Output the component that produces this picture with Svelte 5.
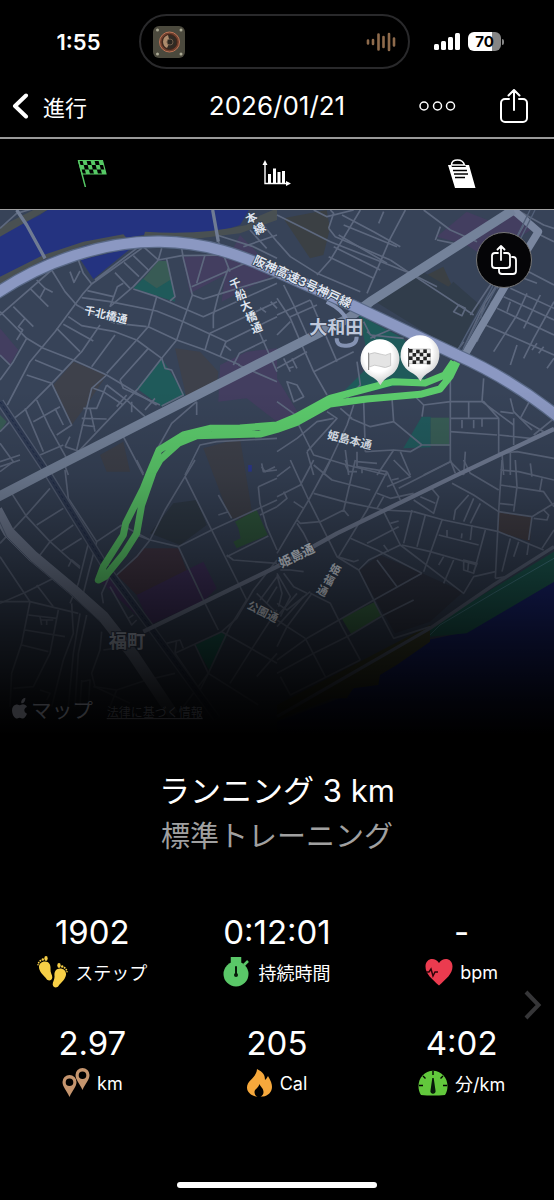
<script>
    // road geometry is kept per map tile, every tile has its own origin
    const tiles = [
        {
            x: 0,
            y: -15,
            roads: [
                'M0 70L50 25 95 12M50 15L80 60 135 160M638 15L655 110 690 200M775 375L831 500',
                'M0 330L155 195M155 195L195 260 230 300 275 325 345 355M235 165L250 205 275 237',
                'M275 237L250 265 165 380 90 470 22 600M275 237L425 130M285 225L410 130',
                'M90 250L145 305M110 225L135 250 158 262M135 250L120 278M40 305L100 365M0 320L80 400',
                'M80 400L130 430 220 465 320 510 470 600M0 525L40 470 80 400M75 340L55 365 68 375 50 405',
                'M210 200L222 232 240 198M345 203L390 250M372 172L417 215M400 152L445 195M430 125L475 165',
                'M475 165L400 245 330 305M245 278L330 290 470 318 550 350 680 410M262 257L340 275',
                'M330 305L352 245 370 235M475 165L485 130M475 165L545 152 690 150M500 162L525 275 510 288',
                'M545 130L550 160 577 270 545 360 530 405 485 460M615 150L590 235M577 270L610 282 665 265 831 215',
                'M575 245L735 175M685 190L655 270 640 330 640 370M400 252L470 275 610 335 640 322 831 235',
                'M470 275L445 365 410 405 320 505M445 365L530 405 615 435 720 480M615 435L630 385 831 290',
                'M660 455L678 410 831 335M675 422L693 437M700 480L718 445 800 405M780 308L798 322M812 290L831 310',
                'M205 335L245 362 345 380 410 405M350 355L440 365M300 360L245 440 155 535 80 610 30 650',
                'M345 390L275 485M445 430L360 525M410 405L485 460 415 550 235 740M170 370L240 440M190 358L280 408',
                'M105 465L190 500M80 510L155 535M155 535L215 660 170 690M485 460L495 490 515 495 550 570 485 603',
                'M360 525L370 550 480 600M320 510L275 550 260 610 230 735M320 540L290 610 250 610M320 540L385 590 435 635',
                'M245 640L320 642M245 660L285 665M270 610L285 680M395 590L395 622M350 605L380 570M435 615L465 580',
                'M280 550L310 560 370 600M30 650L0 680M0 715L40 770 0 800M110 585L150 670 200 760M75 610L130 740',
                'M100 650L180 605M165 610L190 660M120 750L190 720M195 725L210 695M195 725L235 738M0 450L30 480',
                'M370 695L430 810M590 590L590 630M470 735L515 655 590 590M555 810L600 720 650 710 831 700',
                'M715 480L831 530M650 90L760 125 831 160M750 75L800 130M790 60L831 110M730 125L831 90M0 770L60 750',
                'M785 785L795 800 825 785M190 770L205 810'
            ]
        },
        {
            x: 831,
            y: -15,
            roads: [
                'M0 30L80 70 160 110 400 205 590 330M155 70L170 25 160 15M155 70L175 95 340 165M195 30L290 80 370 125',
                'M250 15L160 165 120 210M385 15L340 100 270 265M200 60L360 125M185 90L330 175M170 125L310 195',
                'M155 155L290 220M0 110L40 155 120 205 250 260M305 55L320 20M110 15L150 35 230 15M440 15L520 75 600 110',
                'M480 105L530 115M490 65L475 105M400 205L380 230M340 165L400 205 480 245M560 410L530 450',
                'M530 320L545 300 565 310 555 332ZM580 330L640 240 690 150 740 60M560 430L620 300 660 240M610 340L625 290',
                'M720 15L800 60 831 70M790 90L831 110M755 200L831 240M700 250L831 310M680 275L831 345M660 310L831 390',
                'M625 360L831 450M750 265L720 330 650 440M790 270L740 370M831 290L770 400 740 460M700 290L690 320M720 420L700 480',
                'M765 435L780 415M785 445L800 425M810 490L831 460M660 250L710 190 760 130M645 290L600 410M740 220L780 235',
                'M0 280L40 340 70 410 110 500 150 570M0 330L100 285M20 240L50 300 90 390M0 390L40 350M40 335L120 300',
                'M0 440L110 400M100 285L180 470M0 490L90 440M20 460L40 500M35 490L50 485M45 460L60 490M30 530L50 590 80 575 60 540Z',
                'M0 590L70 640M110 500L230 440M240 470L250 540 200 590M260 350L280 390 380 400M280 400L360 365M270 380L295 400',
                'M520 520L520 770 560 810M520 590L620 590 665 640 665 745M620 520L615 590 710 660M700 580L710 620 765 675',
                'M765 575L730 640 800 680M831 640L770 690M520 640L665 640M575 590L575 640M555 645L555 670M590 645L590 670M615 640L615 665',
                'M520 680L660 690M345 580L350 650 435 720 520 720M435 635L440 600 520 590M410 570L440 600M350 650L280 665 220 640',
                'M260 590L265 740M230 600L210 660 140 810M190 610L225 640M150 620L180 640 90 740M0 740L60 700 120 650 170 640',
                'M90 740L110 810M65 660L110 750 210 780 330 810M435 720L400 740 350 735 300 810M265 740L350 735',
                'M520 770L440 810M370 740L400 810M565 740L560 810M665 745L720 740 831 760M675 745L680 810M700 740L700 810',
                'M665 690L760 700 831 670M710 640L710 720M205 735L215 810M240 740L240 770 300 775M670 620L710 625'
            ]
        },
        {
            x: 0,
            y: 750,
            roads: [
                'M35 100L80 170 150 245 240 325M150 85L75 170 0 250M190 145L110 195M220 195L150 245 120 285M245 235L185 272',
                'M195 30L205 115 290 245 365 195M0 290L90 425M240 320L215 300 205 320M0 430L80 395 180 345M110 375L160 440',
                'M0 425L90 425 235 460M90 425L65 550 35 640 30 740M85 465L170 475M75 510L195 530M65 555L145 575M175 450L150 580 100 680 40 685',
                'M215 430L220 520 190 600 155 740M240 460L220 580 205 740M260 465L235 580 225 740M120 470L125 495M140 480L140 495M160 480L120 480',
                'M265 250L235 370 210 430M290 245L265 340 250 400M330 345L305 400 310 430M305 515L300 570 275 640 285 680 390 730',
                'M245 660L240 740M245 665L270 660 265 740M280 680L350 690 440 660 525 640M350 690L330 740M365 195L450 240 535 260 635 210 831 120',
                'M585 0L555 50 495 150 450 240 410 290 350 345M410 225L450 240M410 0L430 40M555 50L610 160 740 420M535 260L615 430 655 510',
                'M655 105L695 175M655 165L685 155M775 80L831 55M785 10L790 35 831 30M775 80L780 130 800 200 831 270M680 290L805 228',
                'M680 285L700 300 831 310M780 165L831 140M525 580L665 515 831 610M665 515L710 475 760 390 831 300M585 555L625 640 775 735',
                'M625 640L690 500 740 420M690 670L750 575 831 450M500 550L540 540 550 565M530 540L525 580 600 690 625 640M625 640L550 740',
                'M770 400L831 460M780 420L831 350M800 430L831 380M330 380L395 495 410 480M350 365L430 470M385 475L400 465',
                'M380 560L310 570M120 690L150 700 140 720M0 20L60 0M770 650L831 580'
            ]
        },
        {
            x: 831,
            y: 750,
            roads: [
                'M0 110L70 75 110 0M40 0L95 120 180 290 245 330 300 440 350 535 460 500M0 50L40 20M0 280L95 120 160 0',
                'M110 15L165 60 280 90M110 100L200 125 320 150 410 155M235 0L200 150 215 168M200 150L130 185 70 190 60 180M50 125L80 145',
                'M0 140L30 115 20 95M330 35L370 120M350 0L400 50 330 80M365 85L520 5M330 35L270 150 185 290M300 100L340 115 410 100',
                'M345 60L365 55M300 145L320 110M320 155L370 255 560 400 590 350 655 335M370 255L275 300 245 330M220 235L300 270 435 340',
                'M270 250L365 200M340 190L365 183M320 255L335 275M405 150L380 250M445 165L420 260M495 180L440 335M410 155L500 180 665 215 800 270',
                'M375 255L460 275 600 315M485 225L605 255M510 210L510 230M555 220L553 235M585 195L580 240M625 210L590 340 560 330 560 300 600 310 590 335M575 305L572 335',
                'M500 290L485 315M530 300L500 370M525 70L590 105 665 155M575 105L535 150 530 180M590 115L560 185M610 130L580 190M410 120L470 160 485 110 460 80',
                'M430 110L475 130M520 0L535 40M560 0L580 40 665 90M675 0L665 155 655 355M670 30L725 35 831 60M670 75L800 95 831 140M665 130L710 135',
                'M715 0L720 80 710 155M760 10L765 50M795 55L788 95M665 155L765 170 831 130M765 170L755 240M780 160L800 150 815 165 810 180 770 175',
                'M831 210L795 265M700 235L675 335M725 245L710 290M755 250L750 285M655 355L690 350M205 15L215 35 240 35M240 0L240 20 330 35M255 20L255 40M205 0L210 15',
                'M300 300L360 380M435 340L300 415 195 475 90 535 0 600M410 420L320 465 220 525 110 580 0 640M180 290L230 305 245 300',
                'M100 400L160 430 195 500 250 600M85 535L145 650M85 535L0 480M105 400L30 500 0 560M80 410L0 500M60 400L0 470M10 650L40 705 250 600',
                'M0 340L40 410 10 470M20 340L50 380 90 400M10 330L40 330 80 335M60 190L80 220 95 250M0 430L30 450 100 395M0 345L15 400 5 440'
            ]
        }
    ];

    const ground = { x: 0, y: -15 };

    const areas = [
        ['#243380', 'M0 90L120 30 150 10 750 10 720 60 640 85 430 90 300 112 130 165 0 240ZM242 165L395 128 280 222Z'],
        ['#495052', 'M0 65L110 10 150 10 0 95ZM0 215L130 150 250 110 370 88 385 105 260 120 130 165 0 240ZM435 80Q600 92 740 60L760 40 831 10V45L720 85 600 100 430 98Z'],
        ['#433e60', 'M548 155L690 150 720 90 831 205 720 262 665 290 675 210 570 265ZM0 370L55 435 30 480 0 455ZM660 480L740 440 831 430V650L740 580 655 590Z'],
        ['#433e60', 'M831 520L895 625 831 660ZM1310 95L1400 20 1500 60 1540 15 1600 70 1460 160 1400 120Z'],
        ['#3e414b', 'M160 540L220 470 320 510 260 600 215 660ZM525 430L600 440 655 500 650 540 560 580ZM610 730L720 700 760 945 690 940ZM300 750L370 710 390 800 320 800Z'],
        ['#3b4044', 'M850 40L980 15 990 70 970 150 930 160ZM1270 215L1330 185 1355 240 1340 280Z'],
        ['#313d4b', 'M1110 280L1250 190 1345 245 1360 230 1440 300 1370 440Z'],
        ['#1f5a5a', 'M400 250L430 220 515 225 525 290ZM410 550L485 460 555 570 485 605ZM1076 330L1210 400 1280 520 1110 560 1035 555 1110 480Z'],
        ['#385b55', 'M430 222L475 168 503 168 515 222 470 250ZM0 630L20 650 0 680Z'],
        ['#215a5d', 'M1210 730L1265 635H1292V727Z'],
        ['#385d56', 'M1292 638H1347V723H1292Z'],
        ['#30583f', 'M705 950L770 915 803 990 710 1030 700 1010 722 1000 715 970Z'],
        ['#303b48', 'M450 985L520 895 590 885 620 960 540 1020Z'],
        ['#33394a', 'M1076 1095L1140 1050 1266 1105 1390 1160 1290 1250 1185 1285 1130 1190Z'],
        ['#443848', 'M350 1110L430 1030 535 1030 565 1110 410 1170Z'],
        ['#433462', 'M410 1170L610 1070 650 1150 615 1185 450 1260ZM290 1120L350 1110 440 1260Z'],
        ['#1d6258', 'M585 1320L665 1280 680 1295 630 1400Z'],
        ['#3d6f4b', 'M1025 1240L1125 1190 1145 1230 1055 1290Z'],
        ['#413e46', 'M1495 920L1595 935 1590 1010 1495 980Z'],
        ['#1a2674', 'M1662 1130L1400 1280 1260 1310 1130 1400 1020 1480 831 1550V1640H1662Z'],
        ['#3f442f', 'M831 1500L1290 1260 1290 1310 1190 1380 1140 1410 1135 1440 1060 1450 1040 1480 1000 1480 831 1545Z'],
        ['#1d5d55', 'M1290 1265L1662 1040V1130L1400 1285 1290 1295Z']
    ];

    const track = 'M1361 470L1334 510 1275 534 1180 530 1085 555 990 580 890 635 831 660 720 669 630 670 550 690 477 735 450 800 430 850 377 955 370 990 310 1085 295 1125 315 1115 370 1048 410 985 425 900 460 800 480 765 535 715 590 692 780 687 831 673 890 652 990 597 1100 582 1261 568 1320 552 1350 515 1371 472';

    const stats = [
        { value: '1902', label: 'ステップ', icon: 'steps' },
        { value: '0:12:01', label: '持続時間', icon: 'watch' },
        { value: '-', label: 'bpm', icon: 'heart' },
        { value: '2.97', label: 'km', icon: 'pins' },
        { value: '205', label: 'Cal', icon: 'flame' },
        { value: '4:02', label: '分/km', icon: 'gauge' }
    ];

    let tab = 'map';

    // chequered squares for the flags
    const cells = [];
    for (let row = 0; row < 4; row++) {
        for (let col = 0; col < 6; col++) {
            if ((row + col) % 2 === 0) cells.push([col, row]);
        }
    }
</script>

<div class="screen">
    <div class="status">
        <span class="time">1:55</span>
        <div class="island">
            <svg width="32" height="32" viewBox="0 0 32 32" aria-hidden="true">
                <rect width="32" height="32" rx="6" fill="#4b493d" />
                <g fill="#aaa994"><circle cx="4.500" cy="4" r="1.500" /><circle cx="28" cy="4" r="1.500" /><circle cx="4.500" cy="28" r="1.500" /><circle cx="28" cy="28" r="1.500" /></g>
                <circle cx="16.500" cy="16" r="10" fill="#70402e" stroke="#bd7355" />
                <circle cx="16.500" cy="16" r="7.500" fill="#302a23" stroke="#422419" />
                <path d="M15 9a7 7 0 0 0-1 13l2-4v-5z" fill="#ad8b6c" />
                <circle cx="17" cy="16" r="3" fill="#29251f" stroke="#6d5a48" />
            </svg>
            <svg width="30" height="20" viewBox="0 0 30 20" fill="none" stroke="#8f6b4c" stroke-width="2.600" stroke-linecap="round" aria-hidden="true">
                <path d="M2 8.500v3M7 8v4M12.500 2.500v15M17.500 5v10M23 2v16M28 6.500v7" />
            </svg>
        </div>
        <div class="signals">
            <svg width="26" height="17" viewBox="0 0 26 17" fill="#fff" aria-hidden="true">
                <rect y="11" width="5" height="6" rx="1.500" /><rect x="7" y="8" width="5" height="9" rx="1.500" /><rect x="14" y="4" width="5" height="13" rx="1.500" /><rect x="21" width="5" height="17" rx="1.500" />
            </svg>
            <span class="battery">70</span>
        </div>
    </div>

    <header>
        <button class="back">
            <svg width="17" height="26" viewBox="0 0 17 26" fill="none" stroke="#fff" stroke-width="4" stroke-linecap="round" stroke-linejoin="round" aria-hidden="true"><path d="M14 2.500L3 13l11 10.500" /></svg>
            進行
        </button>
        <h1>2026/01/21</h1>
        <div class="actions">
            <button aria-label="その他">
                <svg width="37" height="10" viewBox="0 0 37 10" fill="none" stroke="#fff" stroke-width="1.500" aria-hidden="true"><circle cx="5" cy="5" r="4" /><circle cx="18.500" cy="5" r="4" /><circle cx="31.500" cy="5" r="4" /></svg>
            </button>
            <button aria-label="共有">
                <svg width="28" height="34" viewBox="0 0 28 34" fill="none" stroke="#fff" stroke-width="2" stroke-linecap="round" stroke-linejoin="round" aria-hidden="true"><path d="M9 10H5a4 4 0 0 0-4 4v15a4 4 0 0 0 4 4h18a4 4 0 0 0 4-4V14a4 4 0 0 0-4-4h-4M14 21V1M8.500 6.500L14 1l5.500 5.500" /></svg>
            </button>
        </div>
    </header>

    <nav>
        <button aria-label="地図" aria-pressed={tab === 'map'} on:click={() => (tab = 'map')}>
            <svg width="30" height="30" viewBox="0 0 30 30" aria-hidden="true">
                <g transform="matrix(1 0 .26 1 1.500 1.500)">
                    <path d="M0 0v26.500" stroke="#56c965" stroke-width="1.500" />
                    <path d="M0 0h24v13.500H0z" fill="none" stroke="#56c965" stroke-width="1.200" />
                    {#each cells as [col, row]}
                        {#if row < 3}<rect x={24 - (col + 1) * 4} y={row * 4.5} width="4" height="4.500" fill="#56c965" />{/if}
                    {/each}
                </g>
            </svg>
        </button>
        <button aria-label="グラフ" aria-pressed={tab === 'chart'} on:click={() => (tab = 'chart')}>
            <svg width="30" height="28" viewBox="0 0 30 28" fill="#fff" aria-hidden="true">
                <path d="M3 0l2.500 5H.5zM29 23.500l-5 2.500v-5z" />
                <path d="M2.300 4h1.400v18.800H25v1.500H2.300zM6 14h3v9H6zM11 8.500h3V23h-3zM15.500 12h3v11h-3zM20 11h3v12h-3z" />
            </svg>
        </button>
        <button aria-label="メモ" aria-pressed={tab === 'notes'} on:click={() => (tab = 'notes')}>
            <svg width="30" height="30" viewBox="0 0 30 30" aria-hidden="true">
                <path d="M1 6h3l1 2h14l-1-2h4l6.500 23H8z" fill="#fff" />
                <path d="M4.500 6C4.500 2.500 7 1 10.500 1s6 1.500 7 5z" fill="#000" stroke="#fff" stroke-width="1.600" />
                <path d="M6 11.500H20M7 15H21M8 18.500H18" stroke="#000" stroke-width="1.300" />
            </svg>
        </button>
    </nav>

    <main>
        <div class="map">
            <svg class="canvas" viewBox="0 0 1662 1590" role="img" aria-label="ランニングコース">
                <defs>
                    <linearGradient id="fade" x1="0" y1="0" x2="0" y2="1">
                        <stop offset="0.340" stop-color="#000" stop-opacity="0" />
                        <stop offset="0.500" stop-color="#000" stop-opacity="0.130" />
                        <stop offset="0.660" stop-color="#000" stop-opacity="0.420" />
                        <stop offset="0.800" stop-color="#000" stop-opacity="0.700" />
                        <stop offset="0.920" stop-color="#000" stop-opacity="0.910" />
                        <stop offset="0.990" stop-color="#000" />
                    </linearGradient>
                    <radialGradient id="ball" cx="0.450" cy="0.350" r="0.650">
                        <stop offset="0.550" stop-color="#fff" />
                        <stop offset="1" stop-color="#c9c9c9" />
                    </radialGradient>
                </defs>
                <rect width="1662" height="1590" fill="#374358" />
                <g transform="translate({ground.x} {ground.y})">
                    {#each areas as [fill, d]}
                        <path {d} {fill} />
                    {/each}
                </g>
                {#each tiles as tile}
                    <g transform="translate({tile.x} {tile.y})" class="roads">
                        {#each tile.roads as d}
                            <path {d} />
                        {/each}
                    </g>
                {/each}
                <g transform="translate({ground.x} {ground.y})" class="lines">
                    <path d="M50 15L80 60 135 160M638 15L655 110" stroke="#6f7b93" stroke-width="10" />
                    <path d="M0 590L140 800 310 1075 450 1265 650 1540" stroke="#535e74" stroke-width="24" />
                    <path d="M0 590L140 800 310 1075 450 1265 650 1540" stroke="#2f3b54" stroke-width="16" />
                    <path d="M0 590L140 800 310 1075 450 1265 650 1540" stroke="#1f2b49" stroke-width="3" stroke-dasharray="9 7" />
                    <path d="M831 1535L1290 1270 1480 1140 1662 1025" stroke="#5c677d" stroke-width="10" />
                    <path d="M1290 1290L1320 1260 1480 1165 1662 1060" stroke="#44808a" stroke-width="3" />
                    <path d="M430 1280L831 1085 1011 985 1361 815 1662 672" stroke="#707b93" stroke-width="13" />
                    <path d="M-10 915L25 980 100 1055 220 1155 310 1235 400 1350 520 1530" stroke="#707b92" stroke-width="34" />
                    <path d="M-10 930L20 995 95 1070 215 1170 300 1250" stroke="#536078" stroke-width="3" />
                    <path d="M1391 455L1520 235 1615 80 1540 15" stroke="#7a87a0" stroke-width="23" />
                    <path d="M1365 450L1470 260 1590 15M1380 450L1490 245 1605 15" stroke="#536179" stroke-width="4" />
                    <path d="M-20 883L130 805 831 448 1045 340 1111 290 1540 15" stroke="#74829a" stroke-width="28" />
                    <path d="M980 290Q1030 315 1040 345M1010 400Q1010 425 1040 422 1070 420 1070 395" stroke="#8492b2" stroke-width="12" />
                    <path d="M-10 265C130 170 310 108 480 110C620 112 720 150 831 200L1061 303 1371 450Q1530 520 1680 640" stroke="#596987" stroke-width="38" />
                    <path d="M-10 265C130 170 310 108 480 110C620 112 720 150 831 200L1061 303 1371 450Q1530 520 1680 640" stroke="#8b98c2" stroke-width="31" />
                    <path d="M750 780V800" stroke="#2d3990" stroke-width="11" />
                    <path d={track} stroke="#5ccb6c" stroke-width="21" />
                </g>
                <g class="labels" transform="translate({ground.x} {ground.y})">
                    <text transform="translate(315 341) rotate(13)" font-size="33">千北橋通</text>
                    <text transform="translate(902 242) rotate(25)" font-size="37">阪神高速3号神戸線</text>
                    {#each [...'千船大橋通'] as char, i}
                        <text transform="translate({710 + i * 16} {248 + i * 33}) rotate(-20)" font-size="34">{char}</text>
                    {/each}
                    <text transform="translate(760 50) rotate(-28)" font-size="34">本</text>
                    <text transform="translate(785 82) rotate(-28)" font-size="36">線</text>
                    <text x="1009" y="386" font-size="54" class="place">大和田</text>
                    <text transform="translate(1046 717) rotate(14)" font-size="34">姫島本通</text>
                    <text transform="translate(896 1064) rotate(-26)" font-size="38">姫島通</text>
                    {#each [...'姫福通'] as char, i}
                        <text transform="translate({1000 - i * 19} {1104 + i * 32}) rotate(28)" font-size="33">{char}</text>
                    {/each}
                    <text transform="translate(783 1231) rotate(27)" font-size="33">公園通</text>
                    <text x="381" y="1328" font-size="55" class="place">福町</text>
                </g>

                <g transform="translate(831 -15)">
                    <path d="M308 403a59 59 0 0 1 30 110q-18 9-28 28-10-19-30-28a59 59 0 0 1 28-110z" fill="url(#ball)" />
                    <path d="M275 443v52" stroke="#777" stroke-width="3" />
                    <path d="M277 447q16-8 32 0t32-2v37q-16 10-32 2t-32 2z" fill="#e4e4e4" stroke="#b7b7b7" stroke-width="2" />
                    <path d="M428 391a59 59 0 0 1 30 110q-18 9-28 28-10-19-30-28a59 59 0 0 1 28-110z" fill="url(#ball)" />
                    <path d="M395 429v56" stroke="#333" stroke-width="3" />
                    <path d="M396 432h64v44h-64z" fill="#eee" stroke="#666" />
                    {#each cells as [col, row]}
                        <rect x={396 + col * 10.7} y={432 + row * 11 + (col % 3)} width="10.700" height="11" fill="#222" />
                    {/each}
                </g>
                <rect width="1662" height="1590" fill="url(#fade)" />
                <g class="credit">
                    <path d="M76 1475c-7 1-14 8-12 17 8 0 13-8 12-17zM81 1503c-2-5-7-8-12-8-5 0-6 3-10 3s-7-3-12-2c-16 3-13 32 0 41 5 2 7-2 12-2s7 4 12 2c5-3 8-9 10-14-10-4-11-16 0-20z" transform="translate(0 -12)" />
                    <text x="93" y="1524" font-size="62">マップ</text>
                    <text x="320" y="1521" font-size="36" text-decoration="underline" fill-opacity="0.500">法律に基づく情報</text>
                </g>
            </svg>
            <button class="share" aria-label="地図を共有">
                <svg width="26" height="30" viewBox="0 0 26 30" fill="none" stroke="#fff" stroke-width="1.800" stroke-linecap="round" stroke-linejoin="round" aria-hidden="true"><path d="M7 8H4a3 3 0 0 0-3 3v9a3 3 0 0 0 3 3h12a3 3 0 0 0 3-3v-9a3 3 0 0 0-3-3h-3M10 15V1M6.500 4.500L10 1l3.500 3.500M8 24v2a3 3 0 0 0 3 3h11a3 3 0 0 0 3-3V15a3 3 0 0 0-3-3h-1" /></svg>
            </button>
        </div>

        <div class="title">
            <h2>ランニング 3 km</h2>
            <p>標準トレーニング</p>
        </div>

        <section>
            <dl>
                {#each stats as stat}
                    <div class="stat">
                        <dd>{stat.value}</dd>
                        <dt>
                            {#if stat.icon === 'steps'}
                                <svg width="31" height="32" viewBox="0 0 31 32" fill="#f7cf46" aria-hidden="true">
                                    <g id="foot">
                                        <path d="M2 12C1.500 8 4.500 5.500 8 5.500c4 0 6 3.500 5.500 7.500-.4 3.500 2 6 1.800 8.500-.3 3-4 4-5.800 1.500C7.500 20 3 17 2 12z" />
                                        <ellipse cx="9" cy="2.500" rx="1.700" ry="2.400" /><circle cx="5.800" cy="3.500" r="1.200" /><circle cx="3.400" cy="4.800" r="1" /><circle cx="1.700" cy="6.700" r="0.900" /><circle cx="1" cy="8.700" r="0.800" />
                                    </g>
                                    <use href="#foot" transform="matrix(-1 0 0 1 31 7)" />
                                </svg>
                            {:else if stat.icon === 'watch'}
                                <svg width="28" height="30" viewBox="0 0 28 30" aria-hidden="true">
                                    <path d="M9 1h8v5H9zM21 8l4-4" fill="#5ac768" stroke="#5ac768" stroke-width="2.500" />
                                    <circle cx="13" cy="17" r="12.500" fill="#5ac768" />
                                    <path d="M13 10v7" stroke="#07180a" stroke-width="2" stroke-linecap="round" /><circle cx="13" cy="18" r="2" fill="#07180a" />
                                </svg>
                            {:else if stat.icon === 'heart'}
                                <svg width="28" height="28" viewBox="0 0 28 28" aria-hidden="true">
                                    <path d="M14 27.500C7 21 .5 16 .5 8.500.5 0 10-1.500 14 5c4-6.500 13.500-5 13.500 3.500C27.500 16 21 21 14 27.500z" fill="#eb3b4f" />
                                    <path d="M1 14h3l2-3 2 7 2-4h3" fill="none" stroke="#2c0308" stroke-width="1.500" />
                                </svg>
                            {:else if stat.icon === 'pins'}
                                <svg width="28" height="30" viewBox="0 0 28 30" fill="#c5956e" fill-rule="evenodd" aria-hidden="true">
                                    <path id="pin" d="M20.500 0a7 7 0 0 1 7 7c0 5-4 8-7 15-3-7-7-10-7-15a7 7 0 0 1 7-7zm0 3.500a3.800 3.800 0 1 0 0 7.600 3.800 3.800 0 0 0 0-7.600z" />
                                    <use href="#pin" x="-13" y="7" />
                                </svg>
                            {:else if stat.icon === 'flame'}
                                <svg width="26" height="28" viewBox="0 0 26 28" aria-hidden="true">
                                    <path d="M10 0c6 3 8 6 8 11 1-1 2-2 3-4 3 5 4 8 4 11 0 5-4 9-9 9.500H9C4 26.500 0 23 0 18.500 0 11 9.500 9 10 0z" fill="#f6a83c" />
                                    <path d="M12.500 15c1 3 4 4 4 8 0 2-1 3.500-3 5h-3c-2-1-3-3-3-5 0-3 4-4 5-8z" fill="#000" />
                                </svg>
                            {:else}
                                <svg width="30" height="26" viewBox="0 0 30 26" aria-hidden="true">
                                    <path d="M3 25C-1 19 0 10 4.500 5.500 10-1 20-1 25.500 5.500 30 10 31 19 27 25q-12 1-24 0z" fill="#62c83c" />
                                    <path d="M15 1v4M5 6l2.500 2.500M25 6l-2.500 2.500M1 15.500h4M29 15.500h-4" stroke="#000" stroke-width="1.400" />
                                    <path d="M14.300 8h1.400L17.500 20.500a2.600 2.600 0 1 1-5 0z" fill="#07180a" />
                                </svg>
                            {/if}
                            {stat.label}
                        </dt>
                    </div>
                {/each}
            </dl>
            <button class="next" aria-label="次へ">
                <svg width="18" height="30" viewBox="0 0 18 30" fill="none" stroke="#363638" stroke-width="4" aria-hidden="true"><path d="M2 2l12.500 13L2 28" /></svg>
            </button>
        </section>
    </main>

    <div class="home"></div>
</div>

<style>
    :global(body) {
        background: #000;
    }

    .screen {
        min-height: 100vh;
        display: flex;
        flex-direction: column;
        background: #000;
        color: #fff;
        font-family: Inter, "Noto Sans CJK JP", sans-serif;
    }

    button {
        display: flex;
        align-items: center;
        justify-content: center;
        padding: 0;
        border: none;
        background: none;
        color: inherit;
        font: inherit;
    }

    svg {
        display: block;
        flex: none;
    }

    .status {
        display: grid;
        grid-template-columns: 1fr 271px 1fr;
        align-items: center;
        padding: 14px 5px 0 0;
    }

    .time {
        padding-left: 18px;
        text-align: center;
        font-size: 22px;
        font-weight: 600;
    }

    .island {
        display: flex;
        align-items: center;
        justify-content: space-between;
        height: 51px;
        padding: 0 12px;
        border: 2px solid #29292b;
        border-radius: 28px;
    }

    .signals {
        display: flex;
        align-items: center;
        justify-content: center;
        gap: 8px;
        padding-right: 24px;
    }

    .battery {
        position: relative;
        width: 33px;
        border-radius: 6px;
        background: linear-gradient(90deg, #fff 72%, #858585 72%);
        color: #000;
        text-align: center;
        font-size: 15px;
        line-height: 19px;
        font-weight: 700;
    }

    .battery::after {
        content: "";
        position: absolute;
        top: 7px;
        right: -3px;
        width: 2px;
        height: 6px;
        border-radius: 0 2px 2px 0;
        background: #858585;
    }

    header {
        display: grid;
        grid-template-columns: 1fr auto 1fr;
        align-items: center;
        height: 63px;
        padding: 5px 26px 0 12px;
        border-bottom: 2px solid #9a9a9a;
    }

    .back {
        justify-self: start;
        gap: 14px;
        font-size: 22px;
    }

    h1 {
        margin: 0;
        padding-left: 14px;
        font-size: 26px;
        font-weight: 400;
    }

    .actions {
        display: flex;
        justify-content: flex-end;
        align-items: center;
        gap: 44px;
    }

    nav {
        display: grid;
        grid-template-columns: repeat(3, 1fr);
        height: 70px;
        border-bottom: 1px solid #a0a0a0;
    }

    .map {
        position: relative;
    }

    .canvas {
        width: 100%;
        height: auto;
    }

    .roads {
        fill: none;
        stroke: #5d687e;
        stroke-width: 5;
        stroke-linejoin: round;
    }

    .lines {
        fill: none;
        stroke-linejoin: round;
    }

    .labels {
        fill: #dfe4ee;
        stroke: #344055;
        stroke-width: 5;
        paint-order: stroke;
        text-anchor: middle;
        font-weight: 700;
    }

    .place {
        fill: #c0c9dc;
    }

    .credit {
        fill: #2b2c30;
    }

    .share {
        position: absolute;
        top: 22px;
        right: 22px;
        width: 56px;
        height: 56px;
        border: 1px solid #777;
        border-radius: 50%;
        background: #050507;
    }

    .title {
        padding-top: 28px;
        text-align: center;
    }

    h2,
    p {
        margin: 0;
        font-size: 31px;
        line-height: 46px;
        font-weight: 400;
    }

    p {
        color: #a0a0a0;
        font-size: 29px;
    }

    section {
        position: relative;
        padding-top: 50px;
    }

    dl {
        display: grid;
        grid-template-columns: repeat(3, 1fr);
        row-gap: 31px;
        margin: 0;
    }

    .stat {
        display: flex;
        flex-direction: column;
        align-items: center;
    }

    dd {
        margin: 0;
        font-size: 33px;
        line-height: 44px;
    }

    dt {
        display: flex;
        align-items: center;
        gap: 7px;
        height: 36px;
        font-size: 18px;
    }

    .next {
        position: absolute;
        top: 54%;
        right: 12px;
    }

    .home {
        width: 36%;
        height: 6px;
        margin: auto auto 12px;
        border-radius: 3px;
        background: #fff;
    }
</style>
